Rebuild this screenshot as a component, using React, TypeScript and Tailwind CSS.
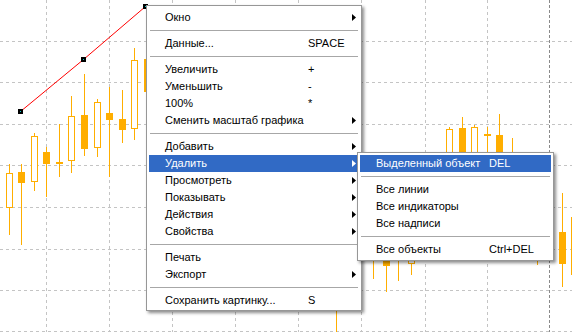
import React from "react";

type Candle = { cx: number; hi: number; lo: number; top?: number; bot?: number; kind: "hollow" | "filled" | "doji" | "wick" };

const candles: Candle[] = [
  { cx: 9, hi: 164, lo: 235, top: 173, bot: 207, kind: "hollow" },
  { cx: 21, hi: 164, lo: 245, top: 172, bot: 182, kind: "filled" },
  { cx: 34, hi: 133, lo: 191, top: 136, bot: 181, kind: "hollow" },
  { cx: 46, hi: 147, lo: 197, top: 152, bot: 163, kind: "filled" },
  { cx: 59, hi: 124, lo: 177, top: 162, bot: 162, kind: "doji" },
  { cx: 71, hi: 96, lo: 173, top: 116, bot: 160, kind: "hollow" },
  { cx: 84, hi: 74, lo: 156, top: 115, bot: 148, kind: "filled" },
  { cx: 97, hi: 99, lo: 157, top: 102, bot: 147, kind: "hollow" },
  { cx: 109, hi: 87, lo: 177, top: 113, bot: 119, kind: "filled" },
  { cx: 122, hi: 90, lo: 143, top: 119, bot: 129, kind: "filled" },
  { cx: 134, hi: 48, lo: 140, top: 60, bot: 128, kind: "hollow" },
  { cx: 147, hi: 50, lo: 100, top: 59, bot: 91, kind: "filled" },
  { cx: 336, hi: 300, lo: 332, kind: "wick" },
  { cx: 373, hi: 250, lo: 279, kind: "wick" },
  { cx: 386, hi: 240, lo: 292, top: 245, bot: 265, kind: "filled" },
  { cx: 398, hi: 250, lo: 281, kind: "wick" },
  { cx: 411, hi: 240, lo: 275, top: 245, bot: 263, kind: "hollow" },
  { cx: 449, hi: 127, lo: 200, top: 129, bot: 170, kind: "hollow" },
  { cx: 462, hi: 117, lo: 200, top: 128, bot: 170, kind: "filled" },
  { cx: 474, hi: 125, lo: 200, top: 127, bot: 170, kind: "hollow" },
  { cx: 487, hi: 127, lo: 160, top: 134, bot: 134, kind: "doji" },
  { cx: 499, hi: 114, lo: 200, top: 135, bot: 170, kind: "filled" },
  { cx: 512, hi: 138, lo: 200, kind: "wick" },
  { cx: 537, hi: 240, lo: 265, kind: "wick" },
  { cx: 562, hi: 193, lo: 287, top: 232, bot: 263, kind: "filled" },
  { cx: 571, hi: 217, lo: 275, kind: "wick" },
];

const ORANGE = "#ffae00";

function Chart() {
  const vx = [46, 109, 172, 235, 298, 361, 425, 487];
  const hy = [41, 82, 124, 165, 207, 249, 290, 331];
  return (
    <svg className="absolute inset-0" width={572} height={332} viewBox="0 0 572 332">
      {hy.map((y) => (
        <line key={"h" + y} x1={0} x2={572} y1={y + 0.5} y2={y + 0.5} stroke="#c4c4c4" strokeDasharray="3 3" />
      ))}
      {vx.map((x) => (
        <line key={"v" + x} x1={x + 0.5} x2={x + 0.5} y1={0} y2={332} stroke="#c4c4c4" strokeDasharray="3 3" />
      ))}
      <line x1={549.5} x2={549.5} y1={0} y2={332} stroke="#8a8a8a" strokeDasharray="3 2" />
      {candles.map((c, i) => {
        const w = <line key="w" x1={c.cx + 0.5} x2={c.cx + 0.5} y1={c.hi} y2={c.lo} stroke={ORANGE} />;
        let body = null;
        if (c.kind === "hollow" && c.top !== undefined && c.bot !== undefined) {
          body = <rect x={c.cx - 2.5} y={c.top + 0.5} width={6} height={c.bot - c.top} fill="#fff" stroke={ORANGE} />;
        } else if (c.kind === "filled" && c.top !== undefined && c.bot !== undefined) {
          body = <rect x={c.cx - 3} y={c.top} width={7} height={c.bot - c.top + 1} fill={ORANGE} />;
        } else if (c.kind === "doji" && c.top !== undefined) {
          body = <rect x={c.cx - 3} y={c.top} width={7} height={2} fill={ORANGE} />;
        }
        return (
          <g key={i}>
            {w}
            {body}
          </g>
        );
      })}
      <polyline points="20.5,111.5 83.5,59.5 145.5,6.5" fill="none" stroke="#ff0000" />
      {[
        [20, 111],
        [83, 59],
        [145, 6],
      ].map(([x, y]) => (
        <g key={x}>
          <rect x={x - 2} y={y - 2} width={5} height={5} fill="#000" />
          <rect x={x} y={y} width={1} height={1} fill="#00c8c8" />
        </g>
      ))}
    </svg>
  );
}

function Arrow({ white }: { white?: boolean }) {
  return (
    <svg width={4} height={7} viewBox="0 0 4 7" className="block">
      <path d="M0 0 L4 3.5 L0 7 Z" fill={white ? "#fff" : "#000"} />
    </svg>
  );
}

type Item = { label?: string; key?: string; sub?: boolean; active?: boolean; sep?: boolean };

function Menu({ items, labelW }: { items: Item[]; labelW: number }) {
  return (
    <>
      {items.map((it, i) =>
        it.sep ? (
          <div key={i} className="h-[9px] flex items-center mx-[3px]">
            <div className="h-px w-full bg-[#a7a7a7]" />
          </div>
        ) : (
          <div
            key={i}
            className={
              "h-[17px] mx-[2px] flex items-center pl-[16px] pr-[3px] " +
              (it.active ? "bg-[#316ac5] text-white" : "text-black")
            }
          >
            <span className="whitespace-nowrap shrink-0" style={{ width: labelW }}>
              {it.label}
            </span>
            <span className="whitespace-nowrap flex-1">{it.key}</span>
            {it.sub && <Arrow white={it.active} />}
          </div>
        )
      )}
    </>
  );
}

const mainItems: Item[] = [
  { label: "Окно", sub: true },
  { sep: true },
  { label: "Данные...", key: "SPACE" },
  { sep: true },
  { label: "Увеличить", key: "+" },
  { label: "Уменьшить", key: "-" },
  { label: "100%", key: "*" },
  { label: "Сменить масштаб графика", sub: true },
  { sep: true },
  { label: "Добавить", sub: true },
  { label: "Удалить", sub: true, active: true },
  { label: "Просмотреть", sub: true },
  { label: "Показывать", sub: true },
  { label: "Действия", sub: true },
  { label: "Свойства", sub: true },
  { sep: true },
  { label: "Печать" },
  { label: "Экспорт", sub: true },
  { sep: true },
  { label: "Сохранить картинку...", key: "S" },
];

const subItems: Item[] = [
  { label: "Выделенный объект", key: "DEL", active: true },
  { sep: true },
  { label: "Все линии" },
  { label: "Все индикаторы" },
  { label: "Все надписи" },
  { sep: true },
  { label: "Все объекты", key: "Ctrl+DEL" },
];

export default function App() {
  return (
    <div
      className="relative w-[572px] h-[332px] bg-white overflow-hidden text-[11px] leading-none"
      style={{ fontFamily: '"Liberation Sans", Arial, sans-serif' }}
    >
      <Chart />
      <div className="absolute left-[146px] top-[5px] w-[216px] h-[306px] bg-white border border-[#979797] pt-[3px] pb-[1px] shadow-[2px_2px_3px_rgba(0,0,0,0.45)]">
        <Menu items={mainItems} labelW={143} />
      </div>
      <div className="absolute left-[357px] top-[152px] w-[197px] h-[109px] bg-white border border-[#979797] pt-[2px] pb-[2px] shadow-[2px_2px_3px_rgba(0,0,0,0.45)]">
        <Menu items={subItems} labelW={113} />
      </div>
    </div>
  );
}
